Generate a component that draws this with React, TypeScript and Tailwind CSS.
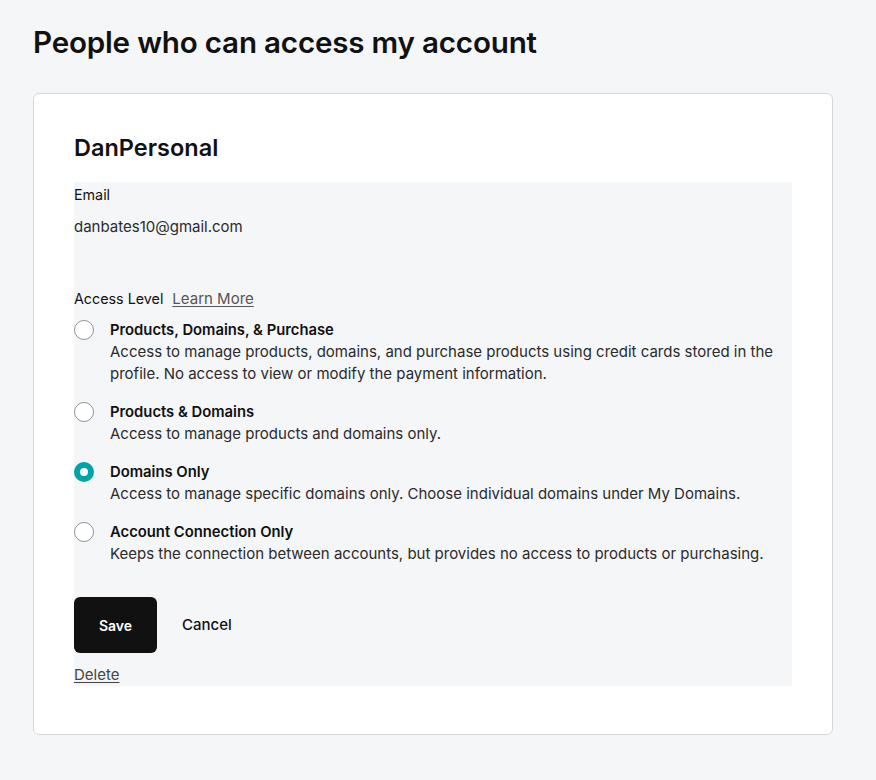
import { FC, useState } from "react";

type Option = {
    id: string;
    title: string;
    description: string;
};

const OPTIONS: Option[] = [
    {
        id: "purchase",
        title: "Products, Domains, & Purchase",
        description:
            "Access to manage products, domains, and purchase products using credit cards stored in the profile. No access to view or modify the payment information.",
    },
    {
        id: "products",
        title: "Products & Domains",
        description: "Access to manage products and domains only.",
    },
    {
        id: "domains",
        title: "Domains Only",
        description: "Access to manage specific domains only. Choose individual domains under My Domains.",
    },
    {
        id: "connection",
        title: "Account Connection Only",
        description: "Keeps the connection between accounts, but provides no access to products or purchasing.",
    },
];

const Radio: FC<{ checked: boolean }> = ({ checked }) =>
    checked ? (
        <span className="mt-px block size-5 shrink-0 rounded-full border-[6px] border-[#00a4a6] bg-white" />
    ) : (
        <span className="mt-px block size-5 shrink-0 rounded-full border border-[#8f9499] bg-white" />
    );

export default function App() {
    const [level, setLevel] = useState("domains");

    return (
        <div className="min-h-[780px] bg-[#f5f6f8] px-[33px] pt-[22px] font-['Inter',sans-serif] text-[#111]">
            <h1 className="text-[29.6px] font-semibold leading-10 tracking-[-0.2px]">People who can access my account</h1>

            <div className="mt-[31px] w-[800px] rounded-md border border-[#d4d8dc] bg-white px-10 pb-12 pt-[40px]">
                <h2 className="text-[23.5px] font-semibold leading-7">DanPersonal</h2>

                <div className="mt-[20px] bg-[#f5f6f8] pt-0.5">
                    <p className="text-[14.3px] leading-[22px]">Email</p>
                    <p className="mt-[10px] text-[15px] leading-[22px] text-[#2b2b2b]">danbates10@gmail.com</p>

                    <div className="mt-[50px] flex items-baseline gap-[9px] text-[14.3px] leading-[22px]">
                        <span>Access Level</span>
                        <a href="#" className="text-[15px] text-[#555] underline underline-offset-2">
                            Learn More
                        </a>
                    </div>

                    <div className="mt-[9px] flex flex-col gap-4">
                        {OPTIONS.map((opt) => (
                            <label key={opt.id} className="flex cursor-pointer gap-4" onClick={() => setLevel(opt.id)}>
                                <Radio checked={level === opt.id} />
                                <span className="flex flex-col">
                                    <span className="text-[14.8px] font-semibold leading-[22px]">{opt.title}</span>
                                    <span className="text-[15px] leading-[22px] text-[#2b2b2b]">{opt.description}</span>
                                </span>
                            </label>
                        ))}
                    </div>

                    <div className="mt-8 flex items-center gap-[25px]">
                        <button className="h-14 w-[83px] rounded-md bg-[#111] text-[14px] font-semibold text-white">Save</button>
                        <button className="text-[15px] font-medium">Cancel</button>
                    </div>

                    <a href="#" className="mt-[11px] block w-fit text-[15px] leading-[22px] text-[#444] underline underline-offset-2">
                        Delete
                    </a>
                </div>
            </div>
        </div>
    );
}
